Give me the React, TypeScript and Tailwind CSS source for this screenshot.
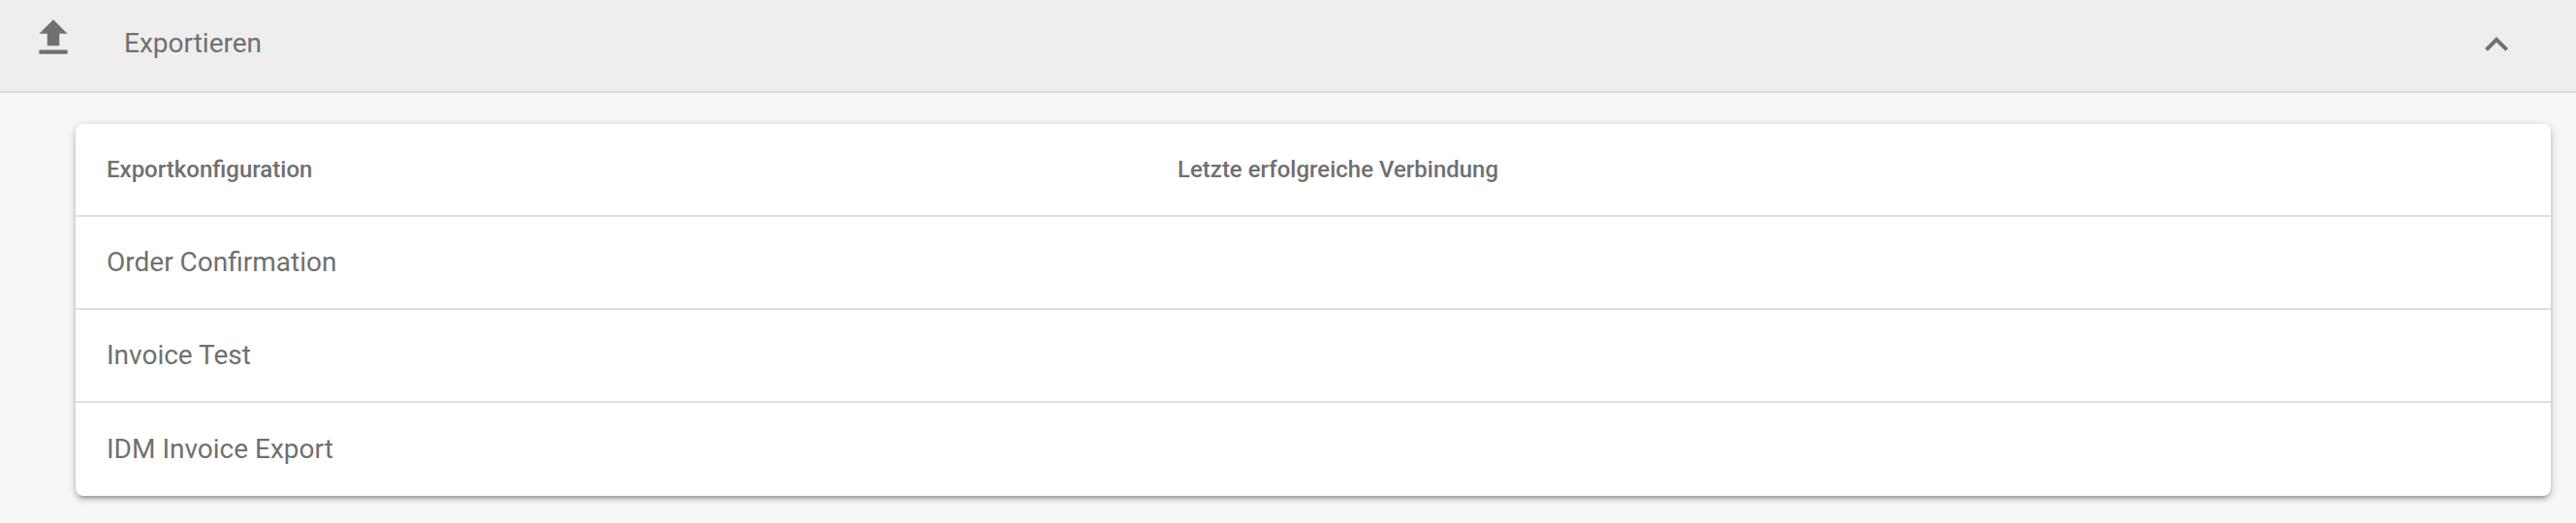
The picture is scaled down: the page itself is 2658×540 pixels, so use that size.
const rows = ["Order Confirmation", "Invoice Test", "IDM Invoice Export"];

export default function App() {
  return (
    <div className="h-[540px] w-full overflow-hidden bg-[#f7f7f7] font-['Roboto',sans-serif] text-[28px] text-[#707070]">
      <header className="flex h-24 items-center border-b-2 border-[#dadada] bg-[#eeeeee] pr-[58px] pl-[30px]">
        <svg className="mb-4 h-[50px] w-[50px] shrink-0" viewBox="0 0 24 24" fill="currentColor">
          <path d="M5 20h14v-2H5v2zm0-10h4v6h6v-6h4l-7-7-7 7z" />
        </svg>
        <h1 className="ml-12 grow pb-1">Exportieren</h1>
        <svg className="mb-0.5 h-12 w-12 shrink-0" viewBox="0 0 24 24" fill="currentColor">
          <path d="M12 8l-6 6 1.41 1.41L12 10.83l4.59 4.58L18 14z" />
        </svg>
      </header>
      <main className="pt-8 pr-[26px] pl-[78px]">
        <section className="rounded-lg bg-white shadow-[0_2px_10px_rgba(0,0,0,0.2),0_4px_4px_rgba(0,0,0,0.14),0_6px_2px_-4px_rgba(0,0,0,0.12)]">
          <div className="grid h-24 grid-cols-[1137px_1fr] items-center border-b-2 border-[#dedede] text-[24px] font-medium">
            <div className="pl-8">Exportkonfiguration</div>
            <div>Letzte erfolgreiche Verbindung</div>
          </div>
          {rows.map((row) => (
            <div key={row} className="flex h-24 items-center border-b-2 border-[#dedede] pl-8 last:border-b-0">{row}</div>
          ))}
        </section>
      </main>
    </div>
  );
}
